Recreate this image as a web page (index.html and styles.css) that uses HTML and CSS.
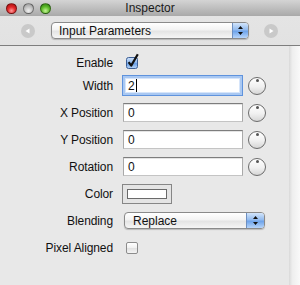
FILE: index.html
```html
<!DOCTYPE html>
<html lang="en">
<head>
    <meta charset="UTF-8">
    <meta name="viewport" content="width=device-width, initial-scale=1.0">
    <title>Inspector</title>
    <link rel="stylesheet" href="styles.css">
</head>
<body>
    <div class="window">
        <!-- Title bar -->
        <div class="titlebar">
            <div class="lights">
                <span class="light close"></span>
                <span class="light mini"></span>
                <span class="light zoom"></span>
            </div>
            <div class="title">Inspector</div>
        </div>

        <!-- Toolbar with page popup -->
        <div class="toolbar">
            <span class="nav-btn">
                <svg width="14" height="14" viewBox="0 0 14 14"><path d="M4.5 7 L8.5 4.5 L8.5 9.5 Z" fill="#fff"/></svg>
            </span>
            <div class="popup popup-large">
                <span class="popup-text">Input Parameters</span>
                <span class="popup-arrows">
                    <svg width="7" height="11" viewBox="0 0 7 11"><path d="M3.5 1 L6 4 L1 4 Z M1 7 L6 7 L3.5 10 Z" fill="#111"/></svg>
                </span>
            </div>
            <span class="nav-btn">
                <svg width="14" height="14" viewBox="0 0 14 14"><path d="M9.5 7 L5.5 4.5 L5.5 9.5 Z" fill="#fff"/></svg>
            </span>
        </div>

        <div class="content">
            <div class="form">
                <span class="label">Enable</span>
                <div class="ctrl">
                    <svg class="check on" width="15" height="16" viewBox="0 0 15 16">
                        <defs>
                            <linearGradient id="blueBox" x1="0" y1="0" x2="0" y2="1">
                                <stop offset="0" stop-color="#cfe2fa"/>
                                <stop offset="0.5" stop-color="#8ab5ec"/>
                                <stop offset="0.55" stop-color="#6a9fe6"/>
                                <stop offset="1" stop-color="#b9d7fa"/>
                            </linearGradient>
                        </defs>
                        <rect x="0.5" y="4.5" width="11" height="11" rx="2" fill="url(#blueBox)" stroke="#3d5f95"/>
                        <path d="M2.6 9.2 L5.2 12.6 L11.8 1.2" fill="none" stroke="#111" stroke-width="2.2" stroke-linejoin="round"/>
                    </svg>
                </div>

                <span class="label">Width</span>
                <div class="ctrl">
                    <div class="field focused">2<span class="caret"></span></div>
                    <span class="dial"></span>
                </div>

                <span class="label">X Position</span>
                <div class="ctrl">
                    <div class="field">0</div>
                    <span class="dial"></span>
                </div>

                <span class="label">Y Position</span>
                <div class="ctrl">
                    <div class="field">0</div>
                    <span class="dial"></span>
                </div>

                <span class="label">Rotation</span>
                <div class="ctrl">
                    <div class="field">0</div>
                    <span class="dial"></span>
                </div>

                <span class="label">Color</span>
                <div class="ctrl">
                    <div class="color-well"><span class="swatch"></span></div>
                </div>

                <span class="label">Blending</span>
                <div class="ctrl">
                    <div class="popup popup-small">
                        <span class="popup-text">Replace</span>
                        <span class="popup-arrows">
                            <svg width="7" height="11" viewBox="0 0 7 11"><path d="M3.5 1 L6 4 L1 4 Z M1 7 L6 7 L3.5 10 Z" fill="#111"/></svg>
                        </span>
                    </div>
                </div>

                <span class="label">Pixel Aligned</span>
                <div class="ctrl">
                    <span class="check off"></span>
                </div>
            </div>
            <div class="side"></div>
        </div>
    </div>
</body>
</html>
```

FILE: styles.css
```css
/* Page */
body {
    margin: 0;
    padding: 0;
    background: #e8e8e8;
    font-family: 'Liberation Sans', Arial, sans-serif;
    font-size: 12px;
    color: #111;
}

.window {
    width: 300px;
    height: 285px;
    display: flex;
    flex-direction: column;
    overflow: hidden;
}

/* Title bar */
.titlebar {
    height: 16px;
    flex: none;
    display: flex;
    align-items: center;
    background: linear-gradient(#d4d4d4, #a9a9a9);
    position: relative;
}

.lights {
    display: flex;
    gap: 6px;
    padding-left: 6px;
}

.light {
    width: 11px;
    height: 11px;
    border-radius: 50%;
    box-sizing: border-box;
    border: 1px solid rgba(0, 0, 0, 0.4);
}

.light.close {
    background: radial-gradient(circle at 50% 75%, #ff9c9c 0, #e32a2b 45%, #a00a0a 100%);
}

.light.mini {
    background: radial-gradient(circle at 50% 75%, #f0f0f0 0, #c2c2c2 50%, #8f8f8f 100%);
}

.light.zoom {
    background: radial-gradient(circle at 50% 75%, #c4f496 0, #5cba28 50%, #2a7710 100%);
}

.title {
    position: absolute;
    left: 0;
    right: 0;
    text-align: center;
    font-size: 12px;
    color: #1a1a1a;
}

/* Toolbar */
.toolbar {
    height: 29px;
    flex: none;
    display: flex;
    align-items: center;
    padding-left: 21px;
    gap: 16px;
    background: linear-gradient(#e4e4e4, #e2e2e2);
    border-bottom: 1px solid #7e7e7e;
}

.nav-btn {
    width: 14px;
    height: 14px;
    border-radius: 50%;
    background: #c9c9c9;
    display: block;
}

.nav-btn svg {
    display: block;
}

/* Popup buttons */
.popup {
    display: flex;
    align-items: stretch;
    box-sizing: border-box;
    border: 1px solid #8a8a8a;
    background: linear-gradient(#ffffff, #f3f3f3 45%, #e4e4e4 55%, #f5f5f5);
    box-shadow: 0 1px 1px rgba(0, 0, 0, 0.2);
    overflow: hidden;
}

.popup-text {
    flex: 1;
    display: flex;
    align-items: center;
    white-space: nowrap;
}

.popup-arrows {
    display: flex;
    align-items: center;
    justify-content: center;
    border-left: 1px solid #6d8fc0;
    background: linear-gradient(#d3e5fb, #93bbee 45%, #6ea3ea 55%, #b7d5fa);
}

.popup-large {
    width: 198px;
    height: 17px;
    border-radius: 4px;
    margin-right: -1px;
}

.popup-large .popup-text {
    padding-left: 7px;
}

.popup-large .popup-arrows {
    width: 15px;
}

.popup-small {
    width: 141px;
    height: 17px;
    border-radius: 4px;
    margin-left: 2px;
}

.popup-small .popup-text {
    padding-left: 8px;
}

.popup-small .popup-arrows {
    width: 17px;
}

/* Content */
.content {
    flex: 1;
    display: flex;
}

.form {
    flex: 1;
    display: grid;
    grid-template-columns: 113px 1fr;
    grid-template-rows: 18px repeat(7, 27px);
    column-gap: 9px;
    align-items: center;
    padding-top: 8px;
    align-content: start;
}

.side {
    width: 11px;
    background: linear-gradient(to right, #d9d9d9, #eeeeee 30%, #f9f9f9);
}

.label {
    text-align: right;
    letter-spacing: -0.1px;
}

.ctrl {
    display: flex;
    align-items: center;
}

/* Checkboxes */
.check {
    display: block;
    margin-left: 4px;
}

.check.on {
    margin-top: -5px;
}

.check.off {
    width: 12px;
    height: 12px;
    box-sizing: border-box;
    border: 1px solid #8c8c8c;
    border-radius: 2px;
    background: linear-gradient(#ffffff, #f0f0f0 50%, #e2e2e2 55%, #f4f4f4);
}

/* Text fields */
.field {
    width: 120px;
    height: 19px;
    box-sizing: border-box;
    margin-left: 1px;
    padding-left: 4px;
    display: flex;
    align-items: center;
    background: #fff;
    border: 1px solid;
    border-color: #7d7d7d #a9a9a9 #c4c4c4 #a9a9a9;
    box-shadow: inset 0 1px 0 #e4e4e4;
}

.field.focused {
    height: 21px;
    margin-left: 0;
    width: 121px;
    padding-left: 5px;
    border-color: #5f93dd;
    box-shadow: inset 0 0 0 2px #a9c8f2, inset 0 0 0 3px #d6e5fa;
}

.caret {
    width: 1px;
    height: 13px;
    background: #000;
    margin-left: 1px;
}

/* Dials */
.dial {
    width: 18px;
    height: 18px;
    box-sizing: border-box;
    margin-left: 5px;
    border-radius: 50%;
    border: 1px solid #6b6b6b;
    background: linear-gradient(#ffffff, #f0f0f0 55%, #d6d6d6);
    position: relative;
}

.dial::after {
    content: "";
    position: absolute;
    left: 6.5px;
    top: 1.5px;
    width: 3px;
    height: 3px;
    border-radius: 50%;
    background: #555;
}

/* Color well */
.color-well {
    padding: 4px;
    border: 1px solid #868686;
    background: #e4e4e4;
}

.swatch {
    display: block;
    width: 40px;
    height: 10px;
    box-sizing: border-box;
    border: 1px solid #6a6a6a;
    background: #fff;
}
```
